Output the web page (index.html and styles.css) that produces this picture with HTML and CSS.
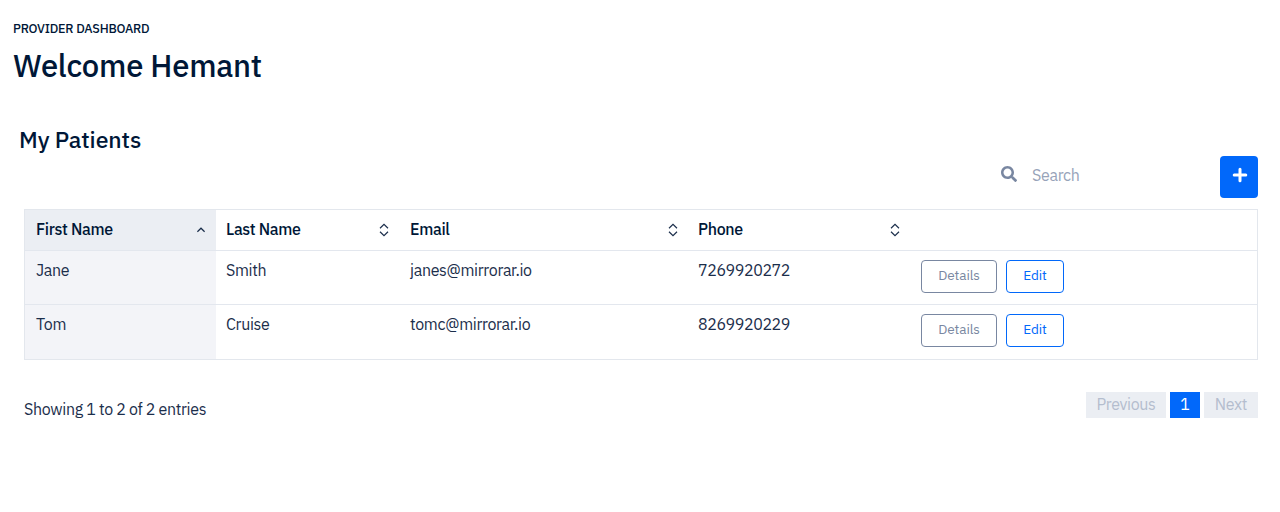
FILE: index.html
```html
<!DOCTYPE html>
<html lang="en">
<head>
<meta charset="utf-8">
<title>Provider Dashboard</title>
<link rel="stylesheet" href="styles.css">
</head>
<body>
<header class="page-header">
  <h6 class="pretitle"><span>PROVIDER DASHBOARD</span></h6>
  <h1 class="title"><span>Welcome Hemant</span></h1>
</header>
<main class="patients">
  <h3 class="section-title"><span>My Patients</span></h3>
  <div class="toolbar">
    <label class="search">
      <svg class="search-icon" viewBox="0 0 512 512"><path d="M505 442.700L405.300 343c-4.500-4.500-10.600-7-17-7H372c27.600-35.300 44-79.700 44-128C416 93.100 322.900 0 208 0S0 93.100 0 208s93.100 208 208 208c48.300 0 92.700-16.400 128-44v16.300c0 6.400 2.500 12.500 7 17l99.700 99.700c9.400 9.400 24.600 9.400 33.900 0l28.300-28.300c9.400-9.400 9.400-24.600.1-34zM208 336c-70.700 0-128-57.200-128-128 0-70.700 57.200-128 128-128 70.700 0 128 57.200 128 128 0 70.700-57.200 128-128 128z"/></svg>
      <span class="search-text">Search</span>
    </label>
    <button class="add" aria-label="Add patient"><svg viewBox="0 0 16 16"><path d="M8 2.200v11.600M2.200 8h11.600"/></svg></button>
  </div>
  <table class="table">
    <colgroup><col class="c1"><col class="c2"><col class="c3"><col class="c4"><col></colgroup>
    <thead>
      <tr>
        <th class="sorted"><div class="th"><span>First Name</span><svg class="sort" viewBox="0 0 10 14"><path d="M1.400 8.700L5 5.200l3.600 3.500"/></svg></div></th>
        <th><div class="th"><span>Last Name</span><svg class="sort" viewBox="0 0 10 14"><path d="M1 5.200L5 1.400l4 3.800M1 8.800l4 3.800 4-3.800"/></svg></div></th>
        <th><div class="th"><span>Email</span><svg class="sort" viewBox="0 0 10 14"><path d="M1 5.200L5 1.400l4 3.800M1 8.800l4 3.800 4-3.800"/></svg></div></th>
        <th><div class="th"><span>Phone</span><svg class="sort" viewBox="0 0 10 14"><path d="M1 5.200L5 1.400l4 3.800M1 8.800l4 3.800 4-3.800"/></svg></div></th>
        <th></th>
      </tr>
    </thead>
    <tbody>
      <tr>
        <td class="sorted">Jane</td><td>Smith</td><td>janes@mirrorar.io</td><td class="num">7269920272</td>
        <td><div class="actions"><button class="btn">Details</button><button class="btn primary">Edit</button></div></td>
      </tr>
      <tr class="last">
        <td class="sorted">Tom</td><td>Cruise</td><td>tomc@mirrorar.io</td><td class="num">8269920229</td>
        <td><div class="actions"><button class="btn">Details</button><button class="btn primary">Edit</button></div></td>
      </tr>
    </tbody>
  </table>
  <footer class="table-footer">
    <span class="info">Showing 1 to 2 of 2 entries</span>
    <nav class="pager"><span class="page prev">Previous</span><span class="page current">1</span><span class="page next">Next</span></nav>
  </footer>
</main>
</body>
</html>
```
FILE: styles.css
```css
* { box-sizing: border-box; }
body { margin: 0; background: #fff; color: #1b2e4b; font: 400 16px/24px "IBM Plex Sans", Roboto, "Liberation Sans", sans-serif; letter-spacing: -.33px; }
h1, h3, h6 { margin: 0; color: #001737; font-weight: 500; }
button { font-family: inherit; }
.page-header { padding: 18px 13px 0; }
.pretitle { font-size: 12.600px; line-height: 20px; letter-spacing: -.22px; }
.title { margin-top: 8px; font-size: 31px; line-height: 40px; letter-spacing: -.22px; }
.patients { padding: 38px 22px 0 24px; }
.section-title { margin-left: -5px; font-size: 23px; line-height: 30px; letter-spacing: -.08px; }
.toolbar { display: flex; justify-content: flex-end; margin-top: 1px; height: 43px; padding-top: 1px; }
.search { display: flex; align-items: center; width: 220px; height: 37px; color: #97a3b9; padding-left: 1px; }
.search-icon { width: 16px; height: 16px; margin: -1px 15px 0 0; fill: #7987a1; }
.add { display: flex; align-items: center; justify-content: center; width: 38px; height: 42px; padding: 0 0 4px 1px; border: 0; border-radius: 4px; background: #0168fa; }
.add svg { width: 16px; height: 16px; stroke: #fff; stroke-width: 3; stroke-linecap: round; }
.table { width: 100%; margin-top: 11px; border-collapse: separate; border-spacing: 0; table-layout: fixed; border: 1px solid #e3e7ed; }
.c1 { width: 191px; }
.c2 { width: 183px; }
.c3 { width: 289px; }
.c4 { width: 222px; }
th, td { padding: 0 10px; text-align: left; vertical-align: top; }
th:first-child, td:first-child { padding-left: 11px; }
th:nth-child(3), td:nth-child(3), th:last-child, td:last-child { padding-left: 11px; }
th { height: 40px; color: #001737; font-weight: 500; }
.th { display: flex; align-items: center; justify-content: space-between; height: 40px; padding-bottom: 2px; }
.sort { width: 10px; height: 14px; margin-top: 2px; fill: none; stroke: #1b2e4b; stroke-width: 1.2; }
td { height: 54px; padding-top: 7px; border-top: 1px solid #e3e7ee; }
.last td { height: 55px; }
.num { letter-spacing: -.4px; }
.sorted { background: #f3f4f8; }
th.sorted { background: #ebeef3; }
.actions { display: flex; gap: 9px; padding-top: 2px; }
.btn { width: 76px; height: 33px; padding: 0 0 3px; border: 1px solid #7987a1; border-radius: 4px; background: #fff; color: #7987a1; font-size: 13.600px; letter-spacing: -.1px; }
.btn.primary { width: 58px; border-color: #0168fa; color: #0168fa; }
.table-footer { display: flex; justify-content: space-between; padding-top: 32px; }
.info { padding-top: 5px; }
.pager { display: flex; gap: 4px; }
.page { height: 26px; background: #ebeef3; color: #b4bdce; text-align: center; }
.prev { width: 80px; }
.current { width: 30px; background: #0168fa; color: #fff; }
.next { width: 54px; }
```
